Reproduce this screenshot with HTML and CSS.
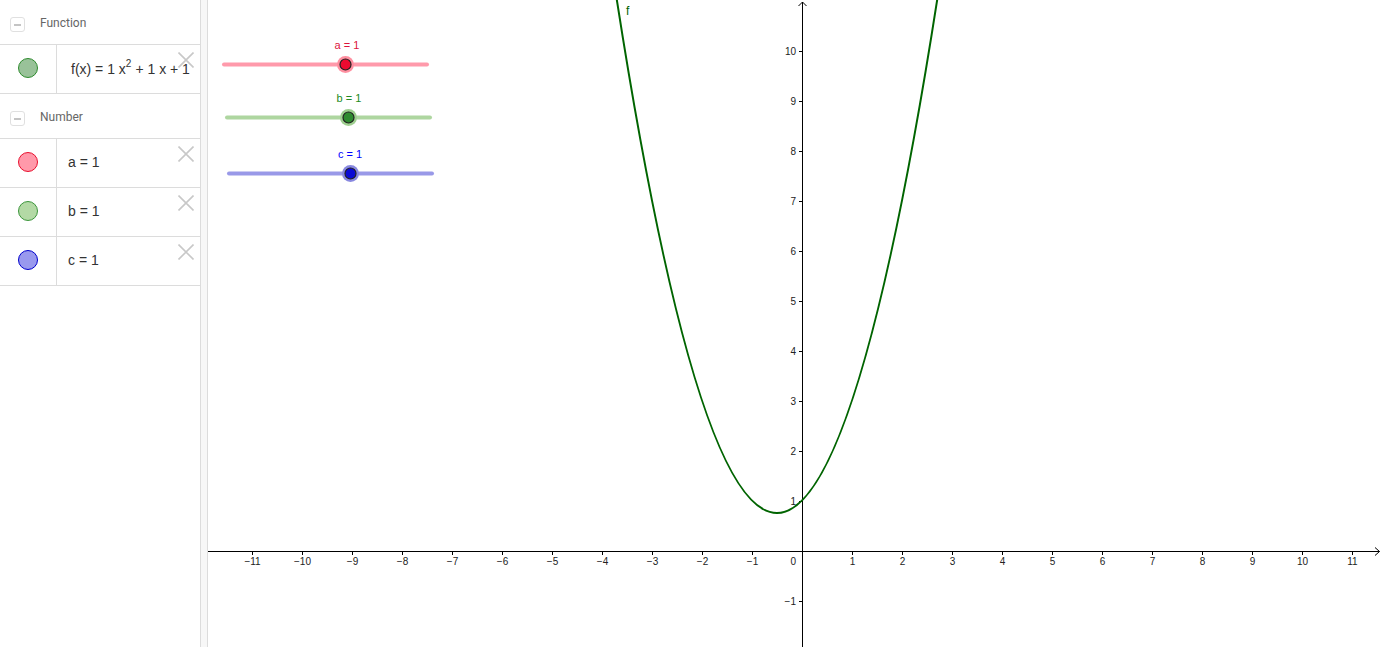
FILE: index.html
```html
<!DOCTYPE html>
<html lang="en">
<head>
<meta charset="utf-8">
<title>Quadratic function – GeoGebra</title>
<link rel="stylesheet" href="styles.css">
</head>
<body>
<div class="app">
  <aside class="algebra">
    <div class="group-header">
      <span class="collapse"><span class="dash"></span></span>
      <span class="group-title">Function</span>
    </div>
    <div class="row">
      <div class="marble-col"><span class="marble m-f"></span></div>
      <div class="expr expr-fn">f(x)&nbsp;= 1&nbsp;x<sup>2</sup>+ 1&nbsp;x&nbsp;+ 1</div>
      <svg class="close" viewBox="0 0 16 16"><path d="M0.5 0.5L15.5 15.5M15.5 0.5L0.5 15.5"/></svg>
    </div>
    <div class="group-header">
      <span class="collapse"><span class="dash"></span></span>
      <span class="group-title">Number</span>
    </div>
    <div class="row">
      <div class="marble-col"><span class="marble m-a"></span></div>
      <div class="expr">a = 1</div>
      <svg class="close" viewBox="0 0 16 16"><path d="M0.5 0.5L15.5 15.5M15.5 0.5L0.5 15.5"/></svg>
    </div>
    <div class="row">
      <div class="marble-col"><span class="marble m-b"></span></div>
      <div class="expr">b = 1</div>
      <svg class="close" viewBox="0 0 16 16"><path d="M0.5 0.5L15.5 15.5M15.5 0.5L0.5 15.5"/></svg>
    </div>
    <div class="row">
      <div class="marble-col"><span class="marble m-c"></span></div>
      <div class="expr">c = 1</div>
      <svg class="close" viewBox="0 0 16 16"><path d="M0.5 0.5L15.5 15.5M15.5 0.5L0.5 15.5"/></svg>
    </div>
  </aside>
  <div class="splitter"></div>
  <main class="canvas">
    <svg class="graph" width="1174" height="647" viewBox="208 0 1174 647">
      <!-- axes -->
      <path class="axis" d="M208 551.5H1379.5M802.5 2V647"/>
      <path class="axis" d="M1375 547.5L1379.5 551.5L1375 555.5M798.5 6L802.5 2L806.5 6"/>
      <!-- x ticks -->
      <path class="axis" d="M252.5 552v3M302.5 552v3M352.5 552v3M402.5 552v3M452.5 552v3M502.5 552v3M552.5 552v3M602.5 552v3M652.5 552v3M702.5 552v3M752.5 552v3M852.5 552v3M902.5 552v3M952.5 552v3M1002.5 552v3M1052.5 552v3M1102.5 552v3M1152.5 552v3M1202.5 552v3M1252.5 552v3M1302.5 552v3M1352.5 552v3"/>
      <!-- y ticks -->
      <path class="axis" d="M799 51.5h3M799 101.5h3M799 151.5h3M799 201.5h3M799 251.5h3M799 301.5h3M799 351.5h3M799 401.5h3M799 451.5h3M799 501.5h3M799 601.5h3"/>
      <g class="xlab">
        <text x="252.5" y="565">−11</text>
        <text x="302.5" y="565">−10</text>
        <text x="352.5" y="565">−9</text>
        <text x="402.5" y="565">−8</text>
        <text x="452.5" y="565">−7</text>
        <text x="502.5" y="565">−6</text>
        <text x="552.5" y="565">−5</text>
        <text x="602.5" y="565">−4</text>
        <text x="652.5" y="565">−3</text>
        <text x="702.5" y="565">−2</text>
        <text x="752.5" y="565">−1</text>
        <text x="852.5" y="565">1</text>
        <text x="902.5" y="565">2</text>
        <text x="952.5" y="565">3</text>
        <text x="1002.5" y="565">4</text>
        <text x="1052.5" y="565">5</text>
        <text x="1102.5" y="565">6</text>
        <text x="1152.5" y="565">7</text>
        <text x="1202.5" y="565">8</text>
        <text x="1252.5" y="565">9</text>
        <text x="1302.5" y="565">10</text>
        <text x="1352.5" y="565">11</text>
      </g>
      <g class="ylab">
        <text x="796" y="55">10</text>
        <text x="796" y="105">9</text>
        <text x="796" y="155">8</text>
        <text x="796" y="205">7</text>
        <text x="796" y="255">6</text>
        <text x="796" y="305">5</text>
        <text x="796" y="355">4</text>
        <text x="796" y="405">3</text>
        <text x="796" y="455">2</text>
        <text x="796" y="505">1</text>
        <text x="796" y="565">0</text>
        <text x="796" y="605">−1</text>
      </g>
      <!-- f(x) = x^2 + x + 1 as an exact quadratic Bezier -->
      <path class="curve" d="M612 -31.5Q777 1057.5 942 -31.5"/>
      <text class="flabel" x="626" y="15">f</text>
      <!-- slider a -->
      <text class="slabel lab-a" x="347" y="49">a = 1</text>
      <path class="track track-a" d="M224 64.5H427"/>
      <circle class="halo halo-a" cx="345.5" cy="64.5" r="8.5"/>
      <circle class="knob knob-a" cx="345.5" cy="64.5" r="5.5"/>
      <!-- slider b -->
      <text class="slabel lab-b" x="349" y="102">b = 1</text>
      <path class="track track-b" d="M227 117.5H430"/>
      <circle class="halo halo-b" cx="348.5" cy="117.5" r="8.5"/>
      <circle class="knob knob-b" cx="348.5" cy="117.5" r="5.5"/>
      <!-- slider c -->
      <text class="slabel lab-c" x="350" y="158">c = 1</text>
      <path class="track track-c" d="M229 173.5H432"/>
      <circle class="halo halo-c" cx="350.5" cy="173.5" r="8.5"/>
      <circle class="knob knob-c" cx="350.5" cy="173.5" r="5.5"/>
    </svg>
  </main>
</div>
</body>
</html>
```
FILE: styles.css
```css
html, body {
  margin: 0;
  padding: 0;
  background: #fff;
}
body {
  font-family: "Liberation Sans", Arial, sans-serif;
  overflow: hidden;
}
.app {
  display: flex;
  width: 1382px;
  height: 647px;
}
.algebra {
  width: 200px;
  flex: none;
  background: #fff;
}
.group-header {
  height: 39px;
  padding-top: 5px;
  border-bottom: 1px solid #dcdcdc;
  display: flex;
  align-items: center;
  padding-left: 10px;
  box-sizing: content-box;
}
.collapse {
  width: 15px;
  height: 15px;
  box-sizing: border-box;
  border: 1px solid #e0e0e0;
  border-radius: 3px;
  display: flex;
  align-items: center;
  justify-content: center;
}
.dash {
  width: 7px;
  height: 2px;
  background: #c4c4c4;
}
.group-title {
  margin-left: 15px;
  margin-top: -3px;
  font-family: Roboto, "Liberation Sans", sans-serif;
  font-size: 12px;
  color: #666;
}
.row {
  position: relative;
  height: 48px;
  border-bottom: 1px solid #dcdcdc;
  display: flex;
}
.marble-col {
  width: 56px;
  flex: none;
  border-right: 1px solid #dcdcdc;
  display: flex;
  align-items: center;
  justify-content: center;
}
.marble {
  width: 20px;
  height: 20px;
  box-sizing: border-box;
  border-radius: 50%;
  border: 1px solid;
  margin-top: -2px;
}
.m-f { background: #99c299; border-color: #2e8b2e; }
.m-a { background: #ff99aa; border-color: #e8102e; }
.m-b { background: #b3d9a5; border-color: #3c963c; }
.m-c { background: #9999ee; border-color: #0000cc; }
.expr {
  display: flex;
  align-items: center;
  padding-left: 11px;
  font-size: 14px;
  color: #333;
  white-space: nowrap;
  margin-top: -2px;
}
.expr-fn {
  padding-left: 14px;
  margin-top: 0;
}
.expr sup {
  font-size: 10px;
  align-self: flex-start;
  margin-top: 13px;
  margin-right: 4px;
}
.close {
  position: absolute;
  right: 6px;
  top: 7px;
  width: 16px;
  height: 16px;
}
.close path {
  stroke: #c8c8c8;
  stroke-width: 1.6;
  fill: none;
}
.splitter {
  width: 8px;
  flex: none;
  box-sizing: border-box;
  border-left: 1px solid #dcdcdc;
  border-right: 1px solid #dcdcdc;
  background: #f7f7f7;
}
.canvas {
  flex: 1;
  overflow: hidden;
}
.graph {
  display: block;
}
.axis {
  stroke: #000;
  stroke-width: 1;
  fill: none;
}
.xlab text, .ylab text {
  font-family: "Liberation Sans", Arial, sans-serif;
  font-size: 10px;
  fill: #222;
}
.xlab text { text-anchor: middle; }
.ylab text { text-anchor: end; }
.curve {
  stroke: #006400;
  stroke-width: 2;
  fill: none;
}
.flabel {
  font-family: "Liberation Sans", Arial, sans-serif;
  font-size: 12px;
  fill: #006400;
}
.slabel {
  font-family: "Liberation Sans", Arial, sans-serif;
  font-size: 11px;
  text-anchor: middle;
}
.lab-a { fill: #dc143c; }
.lab-b { fill: #228b22; }
.lab-c { fill: #0000ff; }
.track {
  stroke-width: 4;
  stroke-linecap: round;
  fill: none;
}
.track-a { stroke: #ff9aab; }
.track-b { stroke: #aed6a0; }
.track-c { stroke: #9999e8; }
.halo-a { fill: #ff8fa0; }
.halo-b { fill: #9fcf90; }
.halo-c { fill: #8888e0; }
.knob {
  stroke: #222;
  stroke-width: 1.2;
}
.knob-a { fill: #ec0a30; }
.knob-b { fill: #2f8a30; }
.knob-c { fill: #0a0ad4; }
```
